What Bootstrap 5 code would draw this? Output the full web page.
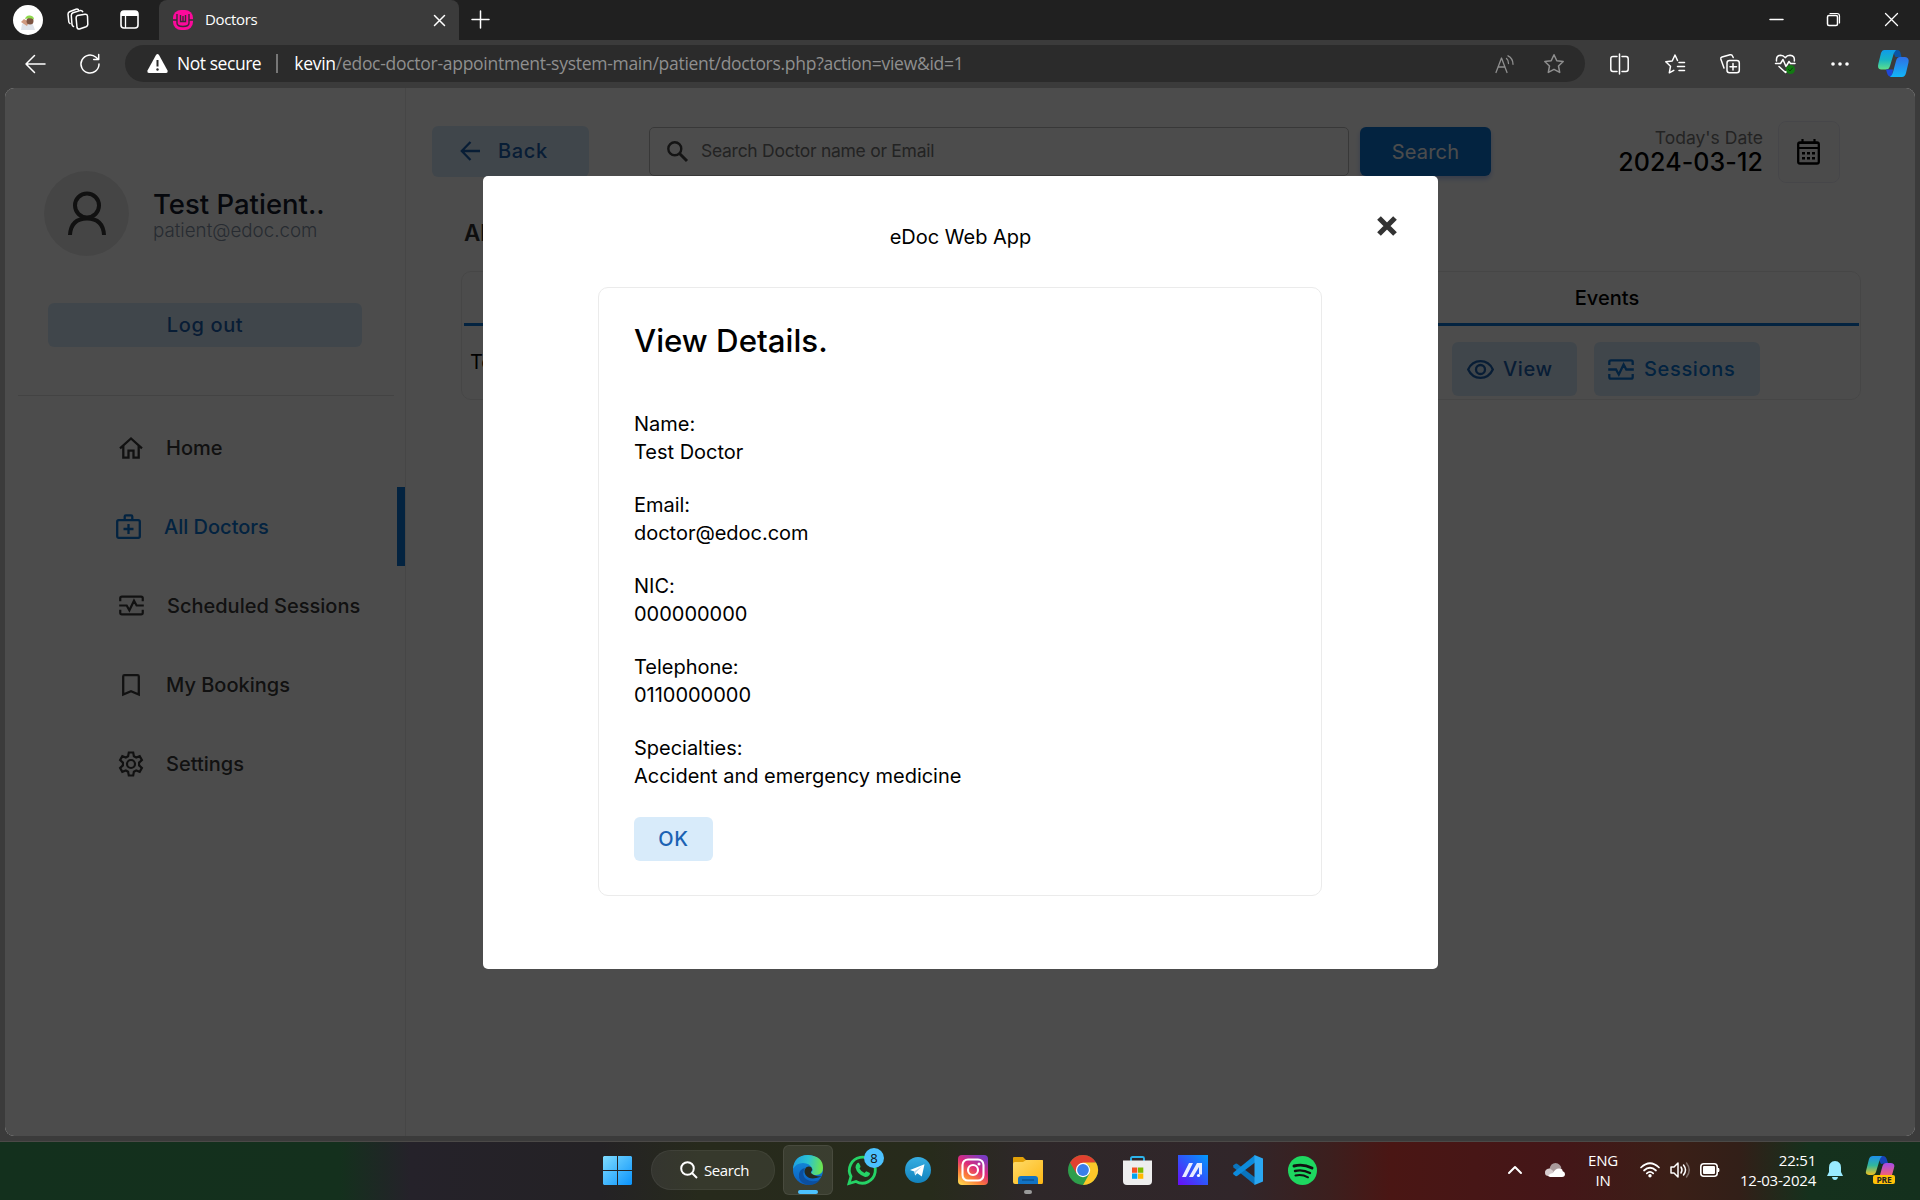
<!DOCTYPE html>
<html lang="en">
<head>
<meta charset="utf-8">
<title>Doctors</title>
<meta name="viewport" content="width=device-width, initial-scale=1">
<link href="https://cdn.jsdelivr.net/npm/bootstrap@5.3.0/dist/css/bootstrap.min.css" rel="stylesheet">
<style>
  body{width:1920px;height:1200px;overflow:hidden;background:#3b3b3b;font-family:Inter,"Liberation Sans",sans-serif;font-size:20px;color:#000}
  svg{display:block;flex:none;overflow:visible}
  .ui-font{font-family:"Open Sans","Noto Sans",sans-serif;color:#fff}
  .ln{fill:none;stroke:currentColor;stroke-width:1.5;stroke-linecap:round;stroke-linejoin:round}
  /* browser chrome */
  .titlebar{height:40px;background:#202020;padding-bottom:1px}
  .tb-left{width:159px;padding-left:13px}
  .profile-pic{width:30px;height:30px}
  .tab-active{width:300px;height:40px;background:#3b3b3b;border-radius:8px 8px 0 0;padding:0 14px 0 14px;font-size:15px;align-self:flex-start}
  .tab-label{letter-spacing:-.35px;margin:-1px 0 0 12px}
  .toolbar{height:48px;padding-bottom:1px}
  .address{width:1460px;height:37px;background:#2b2b2b;border-radius:19px;padding:0 21px 0 22px;font-size:17.5px}
  .url{color:#8f8f8f;letter-spacing:-.28px;white-space:nowrap}
  .viewport{height:1048px;margin:0 5px;border-radius:9px}
  /* page */
  .side-menu{width:401px;border-right:1px solid #ebebeb;padding-top:83px}
  .avatar{width:85px;height:85px;background:#e8e8e8;margin-left:39px}
  .user-block{margin-left:24px}
  .user-name{font-size:27.5px;line-height:32px;font-weight:500;color:#161c2d;margin-top:4px}
  .user-mail{font-weight:300;font-size:18.75px;line-height:24px;color:#8492a6;margin-top:-1px}
  .btn-soft{--bs-btn-bg:#d8ebfa;--bs-btn-color:#1b62b3;--bs-btn-border-color:#d8ebfa;background:#d8ebfa;color:#1b62b3;border:0;border-radius:6px;font-size:20px;font-weight:500;letter-spacing:.65px;line-height:24px;padding:0}
  .logout{width:314px;height:44px;margin:47px 0 0 43px}
  .side-rule{height:1px;background:#e0e0e0;margin:48px 11px 12px 13px}
  .menu-item{height:79px;padding-left:114px;font-weight:500;color:#3b3b3b}
  .menu-item svg{margin-right:23px}
  .menu-item.current{color:#0a76d8;border-right:8px solid #0a76d8;padding-left:111px}
  .menu-item.current svg{margin-right:23px}
  .head-bar{margin:33px 75px 0 26px;height:62px}
  .back{width:157px;height:51px;padding-left:28px;margin:-2px 60px 0 0}
  .search-in{width:700px;height:49px;border:1px solid #bdbdbd;border-radius:5px;color:#757575;font-size:17.5px;letter-spacing:-.27px;padding:0 0 1px 17px;margin:-1px 11px 0 0}
  .btn-go{width:131px;height:49px;background:#0a76d8;color:#fff;border:0;border-radius:6px;font-size:20px;letter-spacing:.2px;box-shadow:0 3px 5px rgba(57,108,240,.35);margin-top:-1px}
  .today{font-size:17.5px;line-height:22px;color:#777;margin-top:-2px}
  .date-val{font-size:25px;line-height:27px;font-weight:500;letter-spacing:.1px}
  .cal-btn{width:62px;height:62px;border:1px solid #ececf4;border-radius:8px;background:#fcfcfc;margin-left:15px;padding-right:1px}
  .page-head{font-size:22.5px;line-height:28px;font-weight:600;color:#313131;margin:36px 0 0 58px}
  .doc-list{width:1400px;height:129px;border:1px solid #ebebeb;border-radius:10px;margin:24px 0 0 55px;padding:0 1px 0 2px}
  .doc-head{height:54px;border-bottom:3px solid #0a76d8}
  .col-ev{width:504px}
  .ev-btn{height:54px;padding-left:15px}
  /* dialog */
  .shade{position:absolute;inset:0;background:rgba(0,0,0,.7)}
  .dialog-box{width:955px;height:793px;margin:88px 0 0 478px;background:#fff;border-radius:5px;position:relative}
  .dialog-x{position:absolute;left:894px;top:40px}
  .dialog-title{line-height:28px;padding-top:47px}
  .detail{width:724px;height:609px;border:1px solid #ebebeb;border-radius:10px;margin:36px 0 0 115px;padding:34px 35px 0}
  .detail-title{font-size:31.25px;line-height:38px;font-weight:500;margin-bottom:50px;white-space:nowrap}
  .field{line-height:28px;margin-bottom:25px;letter-spacing:-.02px}
  .ok{width:79px;height:44px;margin-top:2px}
  /* taskbar */
  .taskbar{margin-top:5px;height:59px;padding-bottom:2px;border-top:1px solid #4b4947;background:linear-gradient(90deg,#13301d 0,#14301d 340px,#25222a 410px,#242225 600px,#272a1c 700px,#272b1b 930px,#2e2729 1030px,#31262a 1240px,#3c1f1e 1330px,#4a1614 1390px,#441618 1560px,#3b1f17 1670px,#321f18 1740px,#15311d 1810px,#14301d 100%)}
  .apps{padding-left:603px}
  .find-pill{width:124px;height:40px;border-radius:20px;background:rgba(255,255,255,.07);border:1px solid rgba(255,255,255,.05);margin:0 8px 0 19px;padding-left:28px;font-size:15px}
  .edge-tile{width:50px;height:50px;border-radius:6px;background:rgba(255,255,255,.09);border:1px solid rgba(255,255,255,.07);position:relative}
  .run-dot{position:absolute;left:14px;bottom:0;width:20px;height:4px;border-radius:2px;background:#4cc2ff}
  .task-ico{width:55px;height:50px;position:relative}
  .idle-dot{position:absolute;left:24px;bottom:1px;width:8px;height:4px;border-radius:2px;background:#9a9a9a}
  .count{position:absolute;left:29px;top:3px;width:20px;height:20px;background:#4cc2ff;color:#111;font-size:13px;line-height:20px}
  .tray{font-size:15px;line-height:20px;letter-spacing:-.22px;padding-right:25px}
</style>
<script src="https://cdn.jsdelivr.net/npm/bootstrap@5.3.0/dist/js/bootstrap.bundle.min.js"></script>
</head>
<body class="d-flex flex-column m-0">

<svg width="0" height="0" class="position-absolute">
  <defs>
    <symbol id="pulse" viewBox="0 0 26 21"><path d="M1.3 6V3q0-1.7 1.7-1.7h20q1.7 0 1.7 1.7v3M1.3 15v3q0 1.7 1.7 1.7h20q1.7 0 1.7-1.7v-3M.2 10.5H8l2.800 5L15.600 5.500l2.700 5h7.500" fill="none" stroke="currentColor" stroke-width="2.300"/></symbol>
    <linearGradient id="gWin" x1="0" y1="0" x2="1" y2="1"><stop stop-color="#7fdcff"/><stop offset="1" stop-color="#0a93fb"/></linearGradient>
    <linearGradient id="gEdge" x1="0" y1=".3" x2="1" y2=".4"><stop stop-color="#1d9fe3"/><stop offset=".5" stop-color="#2bc3d2"/><stop offset="1" stop-color="#6fe64a"/></linearGradient>
    <linearGradient id="gEdge2" x1="0" y1="0" x2="0" y2="1"><stop stop-color="#1490df"/><stop offset="1" stop-color="#0b5fc0"/></linearGradient>
    <linearGradient id="gTg" x1="0" y1="0" x2="0" y2="1"><stop stop-color="#37aee2"/><stop offset="1" stop-color="#1282bd"/></linearGradient>
    <linearGradient id="gIg" x1=".15" y1="1" x2=".75" y2="0"><stop stop-color="#ffd54f"/><stop offset=".3" stop-color="#fb7a3a"/><stop offset=".6" stop-color="#dc2a7b"/><stop offset="1" stop-color="#7b3cc4"/></linearGradient>
    <linearGradient id="gFold" x1="0" y1="0" x2="1" y2="1"><stop stop-color="#ffdb69"/><stop offset="1" stop-color="#fdb714"/></linearGradient>
    <linearGradient id="gMa" x1="0" y1="1" x2="1" y2="0"><stop stop-color="#6a0cf5"/><stop offset=".5" stop-color="#2f55fb"/><stop offset="1" stop-color="#009cfb"/></linearGradient>
    <linearGradient id="gCopA" x1="0" y1="0" x2="0" y2="1"><stop stop-color="#0f9bea"/><stop offset=".5" stop-color="#17b4c4"/><stop offset="1" stop-color="#5fe08a"/></linearGradient>
    <linearGradient id="gCopB" x1="0" y1="0" x2="0" y2="1"><stop stop-color="#2f6fe6"/><stop offset="1" stop-color="#12b5f7"/></linearGradient>
    <linearGradient id="gCopC" x1="0" y1="0" x2="0" y2="1"><stop stop-color="#1e90ec"/><stop offset=".5" stop-color="#31b79b"/><stop offset="1" stop-color="#f2c21d"/></linearGradient>
    <linearGradient id="gCopD" x1="0" y1="0" x2="0" y2="1"><stop stop-color="#a44bea"/><stop offset="1" stop-color="#f2607a"/></linearGradient>
  </defs>
</svg>

<!-- window title bar -->
<header class="titlebar ui-font d-flex align-items-center">
  <div class="tb-left d-flex align-items-center">
    <svg class="profile-pic" viewBox="0 0 30 30"><circle cx="15" cy="15" r="15" fill="#fff"/><path d="M8 25l1-6 4-3 6 1 3 8z" fill="#dfe3ea"/><path d="M8 17l3-3 5 3-2 4z" fill="#d09a80"/><circle cx="17" cy="16" r="3.500" fill="#7d5442"/><path d="M12 14q1-4 5-3.500t4 4q-4-2-9-.5z" fill="#8ed84c"/></svg>
    <svg class="ln ms-4" width="22" height="23" viewBox="0 0 22 23"><path d="M10.500 7.500l7.500-1.300q2.200-.2 2.500 1.800l.3 8.500q0 1.500-1.700 2.200l-6.600 2.300q-2 .5-2.500-1.500l-.9-9.500q-.1-2 1.400-2.500z"/><path d="M6.500 18.500q-1.300-.3-1.500-1.800L4.300 7.500q0-2 1.700-2.700l7-2.200q2-.4 2.700 1M3 15.500q-1-.3-1.200-1.500L1 6.200Q1 4.500 2.500 3.800L9 1.200q1.500-.4 2.400.4"/></svg>
    <svg class="ms-auto" width="19" height="19" viewBox="0 0 19 19" style="margin-right:20px"><rect x="1" y="1" width="17" height="17" rx="3" fill="none" stroke="#fff" stroke-width="1.600"/><path d="M1 6V4q0-3 3-3h11q3 0 3 3v2z" fill="#fff"/><path d="M5.500 6v12" stroke="#fff" stroke-width="1.300"/></svg>
  </div>
  <div class="tab-active d-flex align-items-center">
    <svg width="20" height="20" viewBox="0 0 20 20"><rect x="0" y="0" width="20" height="20" rx="8" fill="#fb0a9b"/><path d="M0 10h3.500M16.500 10H20M4 4v9q0 3.500 6 3.500T16 13V4M7.500 5v6.500h5V5M10 6v5" fill="none" stroke="#3b2a36" stroke-width="1.400"/></svg>
    <span class="tab-label">Doctors</span>
    <svg class="ln ms-auto" width="11" height="11" viewBox="0 0 11 11"><path d="M.5.5l10 10M10.500.5l-10 10"/></svg>
  </div>
  <svg class="ln" style="margin-left:13px" width="17" height="17" viewBox="0 0 17 17"><path d="M8.500 0v17M0 8.500h17"/></svg>
  <div class="ms-auto d-flex align-items-center" style="padding-right:22px">
    <svg class="ln" width="13" height="13" viewBox="0 0 13 13" style="margin-right:44px"><path d="M0 6.500h13"/></svg>
    <svg class="ln" width="13" height="13" viewBox="0 0 13 13" style="margin-right:45px"><rect x=".5" y="2.500" width="10" height="10" rx="1.500"/><path d="M3 .5h7q2.500 0 2.500 2.500v7" stroke-width="1.200"/></svg>
    <svg class="ln" width="13" height="13" viewBox="0 0 13 13"><path d="M.5.5l12 12M12.500.5l-12 12" stroke-width="1.300"/></svg>
  </div>
</header>

<!-- toolbar -->
<nav class="toolbar ui-font d-flex align-items-center">
  <svg class="ln" style="margin-left:25px" width="20" height="18" viewBox="0 0 20 18"><path d="M9.500.5L1 9l8.500 8.500M1 9h19"/></svg>
  <svg class="ln" style="margin:0 25px 0 35px" width="20" height="20" viewBox="0 0 20 20"><path d="M19 10a9 9 0 1 1-3-6.700L18.500 5.500M18.700.500v5h-5"/></svg>
  <div class="address d-flex align-items-center">
    <svg width="21" height="19" viewBox="0 0 21 19"><path d="M9 1q1.500-2 3 0l8.500 15.500Q21 19 19 19H2Q0 19 .5 16.500z" fill="#fff"/><path d="M10.500 6v6.500" stroke="#2b2b2b" stroke-width="2"/><circle cx="10.500" cy="15.500" r="1.200" fill="#2b2b2b"/></svg>
    <span style="margin-left:9px;letter-spacing:-.45px">Not secure</span>
    <span style="width:2px;height:19px;background:#777;margin:0 16px 0 15px"></span>
    <span class="url"><span class="text-white">kevin</span>/edoc-doctor-appointment-system-main/patient/doctors.php?action=view&amp;id=1</span>
    <svg class="ln ms-auto" width="20" height="18" viewBox="0 0 20 18" style="color:#8f8f8f"><path d="M1 17.500L6.500 3 12 17.500M3 12h7M11.500 3.500q2 1.500 2 5M13 .8q5 2.500 5 8.500" stroke-width="1.300"/></svg>
    <svg class="ln" width="20" height="19" viewBox="0 0 20 19" style="color:#8f8f8f;margin-left:29px"><path d="M10 .8l2.800 5.900 6.400.8-4.700 4.500 1.200 6.400L10 15.300l-5.700 3.100L5.500 12 .8 7.500l6.400-.8z"/></svg>
  </div>
  <svg class="ln" style="margin-left:25px" width="19" height="20" viewBox="0 0 19 20"><path d="M7 2.500H3Q.8 2.500.8 5v10q0 2.500 2.200 2.500h4M12 2.500h4q2.200 0 2.200 2.500v10q0 2.500-2.200 2.500h-4M9.500 0v20"/></svg>
  <svg class="ln" style="margin-left:36px" width="20" height="20" viewBox="0 0 20 20"><path d="M12.500 6.500L10 1 7.200 7 .8 7.800l4.700 4.500-1.200 6.500 4.500-2.400M14 8.500h5.500M12.500 12.500h7M14 16.500h5.500"/></svg>
  <svg class="ln" style="margin-left:35px" width="20" height="20" viewBox="0 0 20 20"><rect x="7" y="6.500" width="12.300" height="12.300" rx="2.500"/><path d="M13 9.500v6.500M10 12.700h6.500M4 14L.8 5Q.5 3.500 2 3L10 .8q2-.5 2.500 1.200l.7 1.500"/></svg>
  <svg class="ln" style="margin-left:35px" width="21" height="20" viewBox="0 0 21 20"><path d="M.5 9.500h5l2.500-4 3 7 3-5 1.500 2h4.500M1.500 7Q1 1.500 5.500 1.200q3 0 4.700 2.500Q12 1.200 15 1.200q5 .3 4.300 5.800M4 12.500l6.500 6 1.500-1.500"/><circle cx="15.500" cy="15.500" r="4.500" fill="#127a12" stroke="none"/><path d="M13.500 15.500l1.500 1.500 2.500-3" stroke="#0b400b" stroke-width="1"/></svg>
  <svg style="margin-left:35px" width="18" height="4" viewBox="0 0 18 4"><g fill="#fff"><circle cx="2" cy="2" r="1.800"/><circle cx="9" cy="2" r="1.800"/><circle cx="16" cy="2" r="1.800"/></g></svg>
  <svg style="margin-left:29px" width="31" height="27" viewBox="0 0 31 27"><path d="M14 0h5q3 0 3.500 3l1 4h-6z" fill="#0a55a5"/><path d="M6 0h12q-2 2-3 6l-3 10q-1 3.500-4 3.500H3Q-1 19 .3 14L3 3q1-3 3-3z" fill="url(#gCopA)"/><path d="M8 19.500h7l-1 7.500q-4 0-5-4z" fill="#1f48d8"/><path d="M22 7h5q4.500.5 3.500 5.500L28 23q-1 4-4 4H12q2-1 3-5l3-11q1-4 4-4z" fill="url(#gCopB)"/></svg>
</nav>

<!-- web page -->
<main class="viewport position-relative d-flex overflow-hidden">
  <aside class="side-menu bg-white h-100 flex-shrink-0">
    <div class="d-flex align-items-center">
      <div class="avatar rounded-circle d-flex align-items-center justify-content-center">
        <svg width="38" height="43" viewBox="0 0 38 43"><g fill="none" stroke="#3a3a3a" stroke-width="4"><circle cx="19" cy="13.500" r="12"/><path d="M2 43Q3 26.500 19 26.500T36 43"/></g></svg>
      </div>
      <div class="user-block"><div class="user-name">Test Patient..</div><div class="user-mail">patient@edoc.com</div></div>
    </div>
    <button class="btn btn-soft logout d-block">Log out</button>
    <div class="side-rule"></div>
    <a class="menu-item d-flex align-items-center text-decoration-none"><svg width="24" height="22" viewBox="0 0 24 22"><path d="M1 11.300L12 1.500l11 9.800M4.300 9v11.700H9.500v-7h5v7h5.200V9" fill="none" stroke="currentColor" stroke-width="2.300"/></svg>Home</a>
    <a class="menu-item current d-flex align-items-center text-decoration-none"><svg width="25" height="25" viewBox="0 0 25 25"><g fill="none" stroke="currentColor" stroke-width="2.300"><rect x="1.200" y="6.200" width="22.600" height="17.600" rx="1.500"/><path d="M8.700 6V2.500q0-1.200 1.200-1.200h5.200q1.200 0 1.200 1.200V6M12.500 10v10M7.500 15h10"/></g></svg>All Doctors</a>
    <a class="menu-item d-flex align-items-center text-decoration-none"><svg width="25" height="21"><use href="#pulse"/></svg>Scheduled Sessions</a>
    <a class="menu-item d-flex align-items-center text-decoration-none"><svg width="24" height="22" viewBox="0 0 24 22"><path d="M4.200 20.500V2.500q0-1.300 1.300-1.300h13q1.300 0 1.300 1.300v18l-7.800-3.300z" fill="none" stroke="currentColor" stroke-width="2.300"/></svg>My Bookings</a>
    <a class="menu-item d-flex align-items-center text-decoration-none"><svg width="24" height="26" viewBox="0 0 24 26"><g fill="none" stroke="currentColor" stroke-width="2.200"><path d="M9.800 1.500h4.400l.7 3.700 2.300 1.300 3.500-1.300 2.200 3.900-2.800 2.500v2.800l2.800 2.500-2.200 3.900-3.500-1.300-2.300 1.300-.7 3.700H9.800l-.7-3.700-2.300-1.300-3.500 1.300-2.200-3.900 2.800-2.500v-2.800L1.100 9.100l2.200-3.900 3.500 1.300 2.300-1.300z"/><circle cx="12" cy="13" r="4"/></g></svg>Settings</a>
  </aside>

  <section class="bg-white flex-grow-1">
    <div class="head-bar d-flex align-items-center">
      <button class="btn btn-soft back d-flex align-items-center"><svg width="20" height="20" viewBox="0 0 20 20"><path d="M10.500 1L1.800 10l8.700 9M1.800 10H20" fill="none" stroke="currentColor" stroke-width="2.300"/></svg><span style="margin-left:18px">Back</span></button>
      <div class="search-in d-flex align-items-center"><svg width="21" height="21" viewBox="0 0 21 21"><circle cx="7.800" cy="7.800" r="6.500" fill="none" stroke="#444" stroke-width="2.400"/><path d="M12.500 12.500l7.500 7.500" stroke="#444" stroke-width="3"/></svg><span style="margin-left:13px">Search Doctor name or Email</span></div>
      <button class="btn btn-go p-0">Search</button>
      <div class="ms-auto text-end"><div class="today">Today's Date</div><div class="date-val">2024-03-12</div></div>
      <div class="cal-btn d-flex align-items-center justify-content-center"><svg width="23" height="26" viewBox="0 0 23 26"><path d="M5.500 0v4M17.500 0v4" stroke="#000" stroke-width="2.200"/><rect x="1.200" y="3.500" width="20.600" height="21" rx="1.800" fill="none" stroke="#000" stroke-width="2.300"/><path d="M1 4h21M1 9h21" stroke="#000" stroke-width="2"/><g fill="#000"><path d="M5 13h3v2.500H5zM10 13h3v2.500h-3zM15 13h3v2.500h-3zM5 18h3v2.500H5zM10 18h3v2.500h-3zM15 18h3v2.500h-3z"/></g></svg></div>
    </div>
    <div class="page-head">All Doctors (1)</div>
    <div class="doc-list">
      <div class="doc-head d-flex justify-content-end"><div class="col-ev text-center" style="font-weight:500;line-height:53px">Events</div></div>
      <div class="d-flex justify-content-between">
        <div style="padding:22px 0 0 6px;line-height:28px">Test Doctor</div>
        <div class="col-ev d-flex" style="padding:16px 0 0 97px">
          <button class="btn btn-soft ev-btn d-flex align-items-center" style="width:125px;margin-right:17px"><svg width="27" height="19" viewBox="0 0 27 19"><g fill="none" stroke="currentColor" stroke-width="2.300"><path d="M1.200 9.500Q5 1.200 13.500 1.200T25.800 9.500Q22 17.800 13.500 17.800T1.200 9.500z"/><circle cx="13.500" cy="9.500" r="4.500"/></g></svg><span style="margin-left:9px">View</span></button>
          <button class="btn btn-soft ev-btn d-flex align-items-center" style="width:166px;padding-left:14px;color:#0a76d8"><svg width="26" height="21"><use href="#pulse"/></svg><span style="margin-left:10px">Sessions</span></button>
        </div>
      </div>
    </div>
  </section>

  <div class="shade">
    <div class="dialog-box">
      <svg class="dialog-x" width="20" height="20" viewBox="0 0 20 20"><path d="M2 2l16 16M18 2L2 18" stroke="#333" stroke-width="5.200"/></svg>
      <div class="dialog-title text-center">eDoc Web App</div>
      <div class="detail">
        <div class="detail-title">View Details.</div>
        <div class="field">Name:<br>Test Doctor</div>
        <div class="field">Email:<br>doctor@edoc.com</div>
        <div class="field">NIC:<br>000000000</div>
        <div class="field">Telephone:<br>0110000000</div>
        <div class="field">Specialties:<br>Accident and emergency medicine</div>
        <button class="btn btn-soft ok">OK</button>
      </div>
    </div>
  </div>
</main>

<!-- taskbar -->
<footer class="taskbar ui-font d-flex align-items-center justify-content-between">
  <div class="apps d-flex align-items-center">
    <svg width="29" height="29" viewBox="0 0 29 29"><path d="M1 0h13v14H0V1zM15 0h13l1 1v13H15zM0 15h14v14H1l-1-1zM15 15h14v13l-1 1H15z" fill="url(#gWin)"/></svg>
    <div class="find-pill d-flex align-items-center"><svg width="18" height="18" viewBox="0 0 18 18"><g fill="none" stroke="#fff" stroke-width="2"><circle cx="7.500" cy="7.500" r="6.300"/><path d="M12 12l5 5"/></g></svg><span style="margin-left:6px;letter-spacing:-.4px">Search</span></div>
    <div class="edge-tile d-flex align-items-center justify-content-center">
      <svg width="30" height="30" viewBox="0 0 30 30"><circle cx="15" cy="15" r="15" fill="url(#gEdge2)"/><path d="M0 14Q1 0 15 0q15 1 15 13 0 7-7 7-5 0-5-2 2-2 1.500-4Q17 8 10 8 3 8 0 14z" fill="url(#gEdge)"/><path d="M12 13q-4 7 1 11t14 1q-5 6-13 4.900Q5 27 6 19q1-5 6-6z" fill="#0c4f9e"/><path d="M18.500 12.500Q16 10.500 13 12.500q-3 4 0 8 4 5 14 1.500l2-1q-3 1-7-.5-5-2-4-4 2-2 .5-4z" fill="#272a20"/></svg>
      <span class="run-dot"></span>
    </div>
    <div class="task-ico d-flex align-items-center justify-content-center" style="margin-left:2px">
      <svg width="31" height="30" viewBox="0 0 31 30"><path d="M2 28.500l2-7A13 13 0 1 1 9 26.500z" fill="none" stroke="#25d366" stroke-width="2.800"/><path d="M10 8.500q1.500-1.500 2.500.5l1 2.300q.3.800-1 2.200 1.500 3 5 4.500l1.700-1.800 3.300 1.600q1 .6 0 2.200-2 2.500-5 1.700Q10 19 8.500 12.500q0-2.500 1.500-4z" fill="#25d366"/></svg>
      <span class="count rounded-circle text-center">8</span>
    </div>
    <div class="task-ico d-flex align-items-center justify-content-center"><svg width="26" height="26" viewBox="0 0 26 26"><circle cx="13" cy="13" r="13" fill="url(#gTg)"/><path d="M5 13l14.500-5.700-2.700 12.200-4.500-3.300-2.200 2.200-.8-4z" fill="#fff"/><path d="M9.500 14.300l7.500-5-6 6-.7 3z" fill="#b9d7ea"/></svg></div>
    <div class="task-ico d-flex align-items-center justify-content-center"><svg width="30" height="30" viewBox="0 0 30 30"><rect width="30" height="30" rx="4" fill="url(#gIg)"/><g fill="none" stroke="#fff" stroke-width="2.100"><rect x="4.500" y="4.500" width="21" height="21" rx="5.500"/><circle cx="15" cy="15" r="5"/></g><circle cx="21" cy="9" r="1.500" fill="#fff"/></svg></div>
    <div class="task-ico d-flex align-items-center justify-content-center"><svg width="30" height="27" viewBox="0 0 30 27"><path d="M0 1q0-1 1-1h9l3 3h16q1 0 1 1v10H0z" fill="#e2a008"/><path d="M0 7q0-2 2-2h8l3-2h16q1 0 1 1v21q0 2-1 2H2q-2 0-2-2z" fill="url(#gFold)"/><path d="M5 27v-5q0-3 3-3h14q3 0 3 3v5z" fill="#1273c4"/><path d="M9 23h12" stroke="#0b4b86" stroke-width="1.200"/></svg><span class="idle-dot"></span></div>
    <div class="task-ico d-flex align-items-center justify-content-center"><svg width="30" height="30" viewBox="0 0 30 30"><circle cx="15" cy="15" r="15" fill="#2e9e4b"/><path d="M2 7.500A15 15 0 0 1 28 7.500L15 8.500 8.500 18.500z" fill="#e0402f"/><path d="M28 7.500A15 15 0 0 1 15 30l6.500-11.500V11L15 7.500z" fill="#fdc829"/><circle cx="15" cy="15" r="7.200" fill="#fff"/><circle cx="15" cy="15" r="5.900" fill="#3a7eea"/></svg></div>
    <div class="task-ico d-flex align-items-center justify-content-center"><svg width="29" height="29" viewBox="0 0 29 29"><path d="M8 6V2.500Q8 1 9.500 1h10Q21 1 21 2.500V6" fill="none" stroke="#2db4ea" stroke-width="1.900"/><path d="M0 4.500h29V25q0 4-4 4H4q-4 0-4-4z" fill="#eeeeee"/><path d="M9 11.500h5.300v5.300H9z" fill="#f25022"/><path d="M15 11.500h5.300v5.300H15z" fill="#7fba00"/><path d="M9 17.500h5.300v5.300H9z" fill="#00a4ef"/><path d="M15 17.500h5.300v5.300H15z" fill="#ffb900"/></svg></div>
    <div class="task-ico d-flex align-items-center justify-content-center"><svg width="30" height="30" viewBox="0 0 30 30"><path d="M0 0h30v30H0z" fill="url(#gMa)"/><path d="M4 22L11 8h4L8 22zM11 22l8-14h5v11.500h-3V12l-6 10z" fill="#e9edff"/><circle cx="20.500" cy="20.500" r="1.600" fill="#fff"/></svg></div>
    <div class="task-ico d-flex align-items-center justify-content-center"><svg width="30" height="30" viewBox="0 0 30 30"><path d="M0 10.500l2.500-1.700q1-.5 2 .2L22 22.500V30L.5 12.500z" fill="#0a74bd"/><path d="M0 19l2.500 2q1 .5 2-.2L22 7.500V0L.5 17.500z" fill="#0d8bdc"/><path d="M21.500 0L30 3.500v23L21.500 30z" fill="#2aa7f2"/></svg></div>
    <div class="task-ico d-flex align-items-center justify-content-center"><svg width="29" height="29" viewBox="0 0 29 29"><circle cx="14.500" cy="14.500" r="14.500" fill="#1ed760"/><g fill="none" stroke="#111" stroke-linecap="round"><path d="M6 10q9-2.500 18 2" stroke-width="2.900"/><path d="M7 15q7.500-2 15 2" stroke-width="2.400"/><path d="M7.500 19.500q6.500-1.500 12.500 1.800" stroke-width="2"/></g></svg></div>
  </div>
  <div class="tray d-flex align-items-center">
    <svg class="ln" width="14" height="8" viewBox="0 0 14 8"><path d="M1 7l6-6 6 6" stroke-width="2"/></svg>
    <svg style="margin-left:23px" width="20" height="14" viewBox="0 0 20 14"><path d="M0 10Q0 6 4.500 6 5.500 0 10.500 0q5 .5 6 5.500l-5 2z" fill="#a99a9b"/><path d="M0 10Q0 5.500 5 5.500l9 7-1 .5H3.500Q0 13 0 10z" fill="#d6ccce"/><path d="M3 13q2-3 5-3 2-4.500 6-4.500T17.500 8q2.500 1 2.500 3 0 3-3 3H5z" fill="#fff"/></svg>
    <div class="text-center" style="margin-left:23px">ENG<br>IN</div>
    <svg class="ln" style="margin-left:22px" width="20" height="16" viewBox="0 0 20 16"><path d="M1 5.500Q10-3 19 5.500M4 8.500q6-5.500 12 0M6.800 11.300q3.200-3 6.400 0" stroke-width="1.700"/><circle cx="10" cy="13.800" r="1.700" fill="#fff" stroke="none"/></svg>
    <svg class="ln" style="margin-left:10px" width="20" height="16" viewBox="0 0 20 16"><path d="M1 5h3l4-4v14l-4-4H1zM11 5q2 3 0 6M13.500 3q4 5 0 10"/><path d="M16.500 1q5.500 7 0 14" opacity=".35"/></svg>
    <svg style="margin-left:10px" width="20" height="14" viewBox="0 0 20 14"><rect x=".8" y=".8" width="16.400" height="12.400" rx="3" fill="none" stroke="#fff" stroke-width="1.600"/><rect x="3" y="3" width="12" height="8" rx="1" fill="#fff"/><path d="M17.500 5H19q1 2 0 4h-1.500z" fill="#fff"/></svg>
    <div class="text-end" style="margin-left:20px">22:51<br>12-03-2024</div>
    <svg style="margin-left:11px" width="16" height="19" viewBox="0 0 16 19"><path d="M8 0q6 .5 6 6.500V11l2 4H0l2-4V6.500Q2 .5 8 0zM5 16h6q-.5 3-3 3t-3-3z" fill="#99ebff"/></svg>
    <svg style="margin-left:23px" width="29" height="28" viewBox="0 0 29 28"><path d="M11 0h6q3 0 4 4l1 3-7 1z" fill="#1644b8"/><path d="M7 0h9q-2 2-3 6l-3 10q-1 3-4 3H3q-4-.5-3-4L3 3q1-3 4-3z" fill="url(#gCopC)"/><path d="M20 7h5q4.500.5 3 5l-2 7H14l2.500-9q1-3 3.500-3z" fill="url(#gCopD)"/><rect x="7" y="19" width="22" height="9" rx="2" fill="#ffc107"/><text x="18" y="26.500" text-anchor="middle" font-family="Open Sans" font-size="8.500" font-weight="700" fill="#222">PRE</text></svg>
  </div>
</footer>
</body>
</html>
